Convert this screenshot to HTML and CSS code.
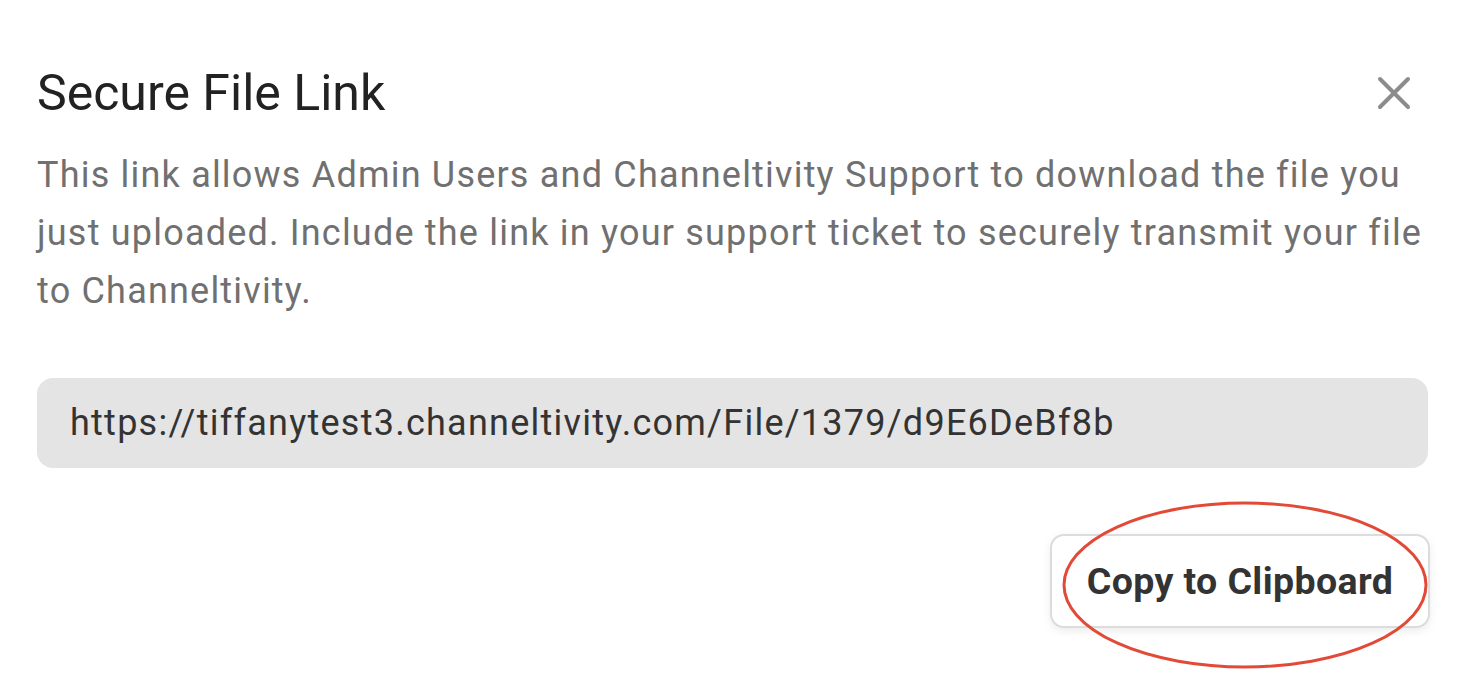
FILE: index.html
```html
<!DOCTYPE html>
<html>
<head>
<meta charset="utf-8">
<link rel="stylesheet" href="styles.css">
</head>
<body>
<div class="dialog">
  <div class="header">
    <h1 class="title">Secure File Link</h1>
    <button class="close" aria-label="Close">
      <svg width="34" height="34" viewBox="0 0 34 34"><path d="M3 3 L31 31 M31 3 L3 31" stroke="#8c8c8c" stroke-width="4" stroke-linecap="round" fill="none"/></svg>
    </button>
  </div>
  <p class="desc">This link allows Admin Users and Channeltivity Support to download the file you just uploaded. Include the link in your support ticket to securely transmit your file to Channeltivity.</p>
  <div class="link-box">https://tiffanytest3.channeltivity.com/File/1379/d9E6DeBf8b</div>
  <div class="actions">
    <div class="btn-wrap">
      <button class="copy-btn">Copy to Clipboard</button>
      <svg class="circle" width="370" height="170" viewBox="0 0 370 170"><ellipse cx="185" cy="85" rx="181" ry="82" fill="none" stroke="#e24a38" stroke-width="3"/></svg>
    </div>
  </div>
</div>
</body>
</html>
```

FILE: styles.css
```css
html, body {
  margin: 0;
  padding: 0;
  background: #fff;
}
body {
  font-family: Roboto, "Liberation Sans", sans-serif;
  min-height: 681px;
}
.dialog {
  width: 1391px;
  padding: 58px 0 53px 37px;
}
.header {
  display: flex;
  justify-content: space-between;
  align-items: center;
  height: 70px;
}
.title {
  margin: 0;
  font-size: 50px;
  font-weight: 400;
  color: #222;
}
.close {
  border: none;
  background: none;
  padding: 0;
  margin-right: 17px;
  width: 34px;
  height: 34px;
  display: flex;
}
.desc {
  margin: 18px 0 0;
  font-size: 36px;
  letter-spacing: 1.2px;
  line-height: 58px;
  color: #707070;
  width: 1400px;
}
.link-box {
  margin-top: 58px;
  height: 90px;
  background: #e4e4e4;
  border-radius: 16px;
  display: flex;
  align-items: center;
  padding-left: 33px;
  font-size: 36px;
  letter-spacing: 1.25px;
  color: #333;
}
.actions {
  display: flex;
  justify-content: flex-end;
  margin-top: 66px;
  margin-right: -2px;
}
.btn-wrap {
  position: relative;
  display: flex;
}
.copy-btn {
  width: 380px;
  height: 94px;
  border: 2px solid #dcdcdc;
  border-radius: 14px;
  background: #fff;
  box-shadow: 0 3px 8px rgba(0,0,0,0.08);
  font-family: Roboto, "Liberation Sans", sans-serif;
  font-weight: 700;
  font-size: 37.5px;
  letter-spacing: 0.4px;
  color: #333;
  padding: 0;
}
.circle {
  position: absolute;
  left: 10px;
  top: -34px;
  display: block;
  overflow: visible;
  pointer-events: none;
}
```
